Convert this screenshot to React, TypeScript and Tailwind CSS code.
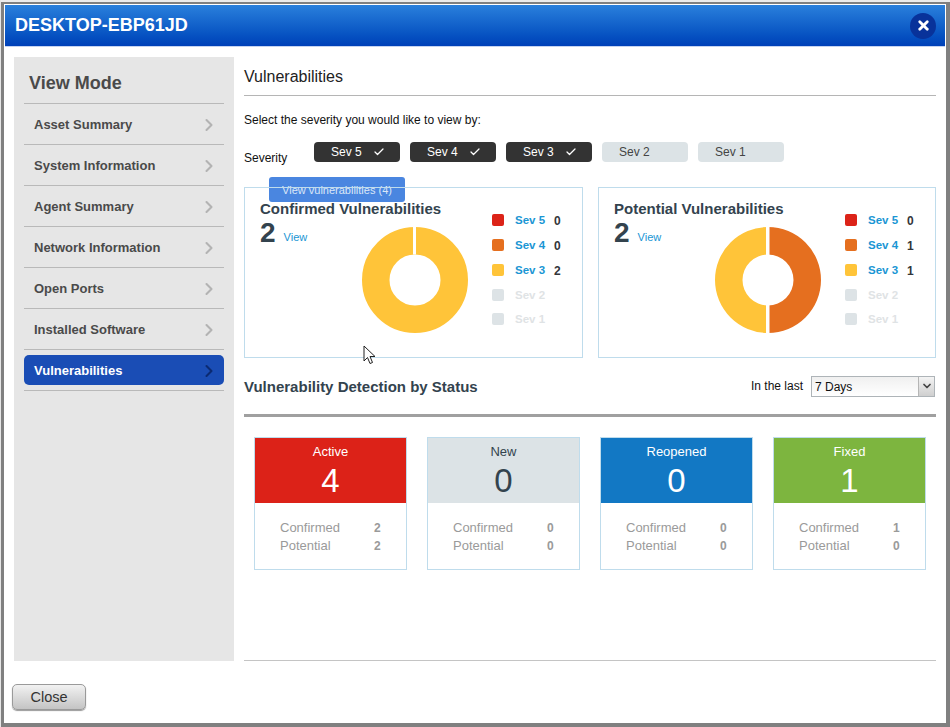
import { X, ChevronRight, Check, ChevronDown } from 'lucide-react';

const navItems = ['Asset Summary', 'System Information', 'Agent Summary', 'Network Information', 'Open Ports', 'Installed Software'];

const pills = [
  { label: 'Sev 5', on: true },
  { label: 'Sev 4', on: true },
  { label: 'Sev 3', on: true },
  { label: 'Sev 2', on: false },
  { label: 'Sev 1', on: false },
];

const legendColors = ['bg-[#dc2318]', 'bg-[#e56f1f]', 'bg-[#ffc439]', 'bg-[#dde3e6]', 'bg-[#dde3e6]'];

const statusCards = [
  { label: 'Active', total: 4, confirmed: 2, potential: 2, head: 'bg-[#dc2218] text-white' },
  { label: 'New', total: 0, confirmed: 0, potential: 0, head: 'bg-[#dce3e6] text-[#33434e]' },
  { label: 'Reopened', total: 0, confirmed: 0, potential: 0, head: 'bg-[#1278c4] text-white' },
  { label: 'Fixed', total: 1, confirmed: 1, potential: 0, head: 'bg-[#7db53f] text-white' },
];

function Donut({ split }: { split: boolean }) {
  return (
    <svg width="108" height="108" viewBox="0 0 108 108" className="block">
      {split ? (
        <>
          <path d="M54 1 A53 53 0 0 1 54 107 L54 79.5 A25.5 25.5 0 0 0 54 28.5 Z" fill="#e56f1f" />
          <path d="M54 107 A53 53 0 0 1 54 1 L54 28.5 A25.5 25.5 0 0 0 54 79.5 Z" fill="#ffc439" />
          <rect x="52" y="0" width="3.5" height="108" fill="#fff" />
        </>
      ) : (
        <>
          <circle cx="54" cy="54" r="39.25" fill="none" stroke="#ffc439" strokeWidth="27.5" />
          <rect x="52" y="0" width="3" height="28.5" fill="#fff" />
        </>
      )}
    </svg>
  );
}

function VulnCard({ title, total, counts, split, width, donutGap, legendGap }: { title: string; total: number; counts: number[]; split: boolean; width: string; donutGap: string; legendGap: string }) {
  return (
    <div className={`relative ${width} h-[171px] border border-[#bfdcec] pl-[15px] pt-[12px] flex`}>
      <div className="w-[216px] shrink-0">
        <div className="text-[15px] leading-[18px] font-bold text-[#33434e] whitespace-nowrap">{title}</div>
        <div className="flex items-start h-[30px]">
          <span className="text-[28px] leading-[30px] font-bold text-[#33434e]">{total}</span>
          <span className="text-[11px] leading-[14px] text-[#1a96d4] ml-[8px] mt-[12px]">View</span>
        </div>
        <div className={`${donutGap} mt-[-22px]`}>
          <Donut split={split} />
        </div>
      </div>
      <div className={`${legendGap} mt-[7px] flex flex-col`}>
        {['Sev 5', 'Sev 4', 'Sev 3', 'Sev 2', 'Sev 1'].map((s, i) => (
          <div key={s} className={`flex items-center ${i < 4 ? 'h-[25px]' : 'h-[24px]'}`}>
            <span className={`w-[12px] h-[12px] rounded-[2px] ${legendColors[i]}`} />
            <span className={`ml-[11px] w-[39px] mt-[2px] text-[11.5px] font-bold ${i < 3 ? 'text-[#1a96d4]' : 'text-[#dfe3e5]'}`}>{s}</span>
            {i < 3 && <span className="text-[12px] mt-[2px] font-bold text-[#33363a]">{counts[i]}</span>}
          </div>
        ))}
      </div>
    </div>
  );
}

export default function App() {
  return (
    <div className="w-[950px] h-[727px] overflow-hidden bg-[#808080] border-l border-[#e6e6e6] pl-[3px] font-['Liberation_Sans',Arial,sans-serif]">
      <div className="h-[2px] bg-[#ececec] ml-[-3px] mb-[2px]" />
      <div className="w-[942px] h-[719px] bg-white flex flex-col">
        <div className="h-[42px] shrink-0 flex items-center justify-between pl-[10px] pr-[9px] mx-[1px] mt-[1px] border-b border-[#c5d3f0] bg-gradient-to-b from-[#2a80dc] to-[#0040b8]">
          <span className="text-[18px] font-bold text-white">DESKTOP-EBP61JD</span>
          <span className="w-[26px] h-[26px] rounded-full bg-[#08329a] flex items-center justify-center">
            <X size={15} strokeWidth={4.5} className="text-white" />
          </span>
        </div>

        <div className="flex mt-[10px] ml-[10px] h-[604px]">
          <aside className="w-[220px] h-[604px] bg-[#e6e6e6] px-[10px]">
            <div className="h-[46px] pl-[5px] pt-[15px] text-[18px] leading-[22px] font-bold text-[#4a4a4a]">View Mode</div>
            <div className="border-t border-[#b9b9b9]">
              {navItems.map((n) => (
                <div key={n} className="h-[41px] border-b border-[#b9b9b9] flex items-center justify-between pt-[2px] pl-[10px] pr-[5px]">
                  <span className="text-[13px] font-bold text-[#4a4a4a]">{n}</span>
                  <ChevronRight size={20} strokeWidth={2.5} className="text-[#b3b3b3]" />
                </div>
              ))}
              <div className="h-[41px] border-b border-[#b9b9b9] flex items-center">
                <div className="w-full h-[30px] mt-[-1px] rounded-[5px] bg-[#1a4db5] flex items-center justify-between pt-[2px] pl-[10px] pr-[5px]">
                  <span className="text-[13px] font-bold text-white">Vulnerabilities</span>
                  <ChevronRight size={20} strokeWidth={2.5} className="text-[#0b2a72]" />
                </div>
              </div>
            </div>
          </aside>

          <main className="relative w-[692px] ml-[10px]">
            <div className="h-[39px] border-b border-[#b5b5b5] pt-[9px] text-[16px] leading-[22px] text-[#222]">Vulnerabilities</div>
            <div className="mt-[16px] text-[12px] leading-[16px] text-[#111]">Select the severity you would like to view by:</div>
            <div className="flex mt-[14px] h-[20px]">
              <span className="w-[70px] text-[12px] leading-[16px] mt-[8px] text-[#111]">Severity</span>
              <div className="flex gap-[10px]">
                {pills.map((p) => (
                  <div key={p.label} className={`w-[86px] h-[20px] rounded-[4px] flex items-center pl-[17px] text-[12px] ${p.on ? 'bg-[#333333] text-white' : 'bg-[#dce3e6] text-[#444]'}`}>
                    <span>{p.label}</span>
                    {p.on && <Check size={12} strokeWidth={2.5} className="ml-[11px]" />}
                  </div>
                ))}
              </div>
            </div>

            <div className="absolute left-[25px] top-[120px] w-[136px] h-[25px] rounded-[3px] bg-[#4a86e0] text-center text-[11px] leading-[26px] text-[#dbe6f7]">View vulnerabilities (4)</div>

            <div className="flex justify-between mt-[25px]">
              <VulnCard title="Confirmed Vulnerabilities" total={2} counts={[0, 0, 2]} split={false} width="w-[339px]" donutGap="ml-[101px]" legendGap="ml-[16px]" />
              <VulnCard title="Potential Vulnerabilities" total={2} counts={[0, 1, 1]} split={true} width="w-[338px]" donutGap="ml-[100px]" legendGap="ml-[15px]" />
            </div>

            <div className="flex items-center justify-between h-[40px] mt-[9px]">
              <span className="text-[15px] font-bold text-[#33434e]">Vulnerability Detection by Status</span>
              <div className="flex items-center mr-[1px] mt-[-2px]">
                <span className="text-[12px] text-[#111] mr-[8px]">In the last</span>
                <div className="w-[124px] h-[21px] border border-[#aeb4b8] flex items-center justify-between bg-gradient-to-b from-[#f0f0f0] to-white">
                  <span className="text-[12px] pl-[3px] text-[#111] mt-[2px]">7 Days</span>
                  <span className="w-[16px] h-full bg-gradient-to-b from-[#f4f4f4] to-[#cfcfcf] border-l border-[#b5b5b5] flex items-center justify-center">
                    <ChevronDown size={12} strokeWidth={3.5} className="text-[#444]" />
                  </span>
                </div>
              </div>
            </div>
            <div className="h-[3px] bg-[#a0a0a0] mt-[7px]" />

            <div className="flex gap-[20px] mx-[10px] mt-[20px]">
              {statusCards.map((c) => (
                <div key={c.label} className="w-[153px] h-[133px] border border-[#bfdcec]">
                  <div className={`h-[65px] text-center ${c.head}`}>
                    <div className="text-[13px] leading-[16px] pt-[6px] h-[23px]">{c.label}</div>
                    <div className="text-[33px] leading-[36px] mt-[2px]">{c.total}</div>
                  </div>
                  <div className="pl-[25px] pt-[16px] text-[13px] leading-[18px] text-[#9a9a9a]">
                    <div className="flex"><span className="w-[94px]">Confirmed</span><span className="text-[12px] font-bold">{c.confirmed}</span></div>
                    <div className="flex"><span className="w-[94px]">Potential</span><span className="text-[12px] font-bold">{c.potential}</span></div>
                  </div>
                </div>
              ))}
            </div>

            <div className="absolute left-0 right-0 top-[603px] h-px bg-[#c4c4c4]" />

            <svg className="absolute left-[119px] top-[288px]" width="14" height="20" viewBox="0 0 14 20">
              <path d="M1 1 V16 L4.5 12.5 L7 18.5 L9.5 17.5 L7 11.5 H12 Z" fill="#fff" stroke="#222" strokeWidth="1" strokeLinejoin="round" />
            </svg>
          </main>
        </div>

        <div className="ml-[8px] mt-[23px]">
          <button className="w-[74px] h-[26px] pt-[2px] rounded-[5px] border border-[#9a9a9a] bg-gradient-to-b from-[#f2f2f2] to-[#c4c4c4] text-[14.5px] text-[#333] shadow-[0_1px_1px_#999]">Close</button>
        </div>
      </div>
    </div>
  );
}
